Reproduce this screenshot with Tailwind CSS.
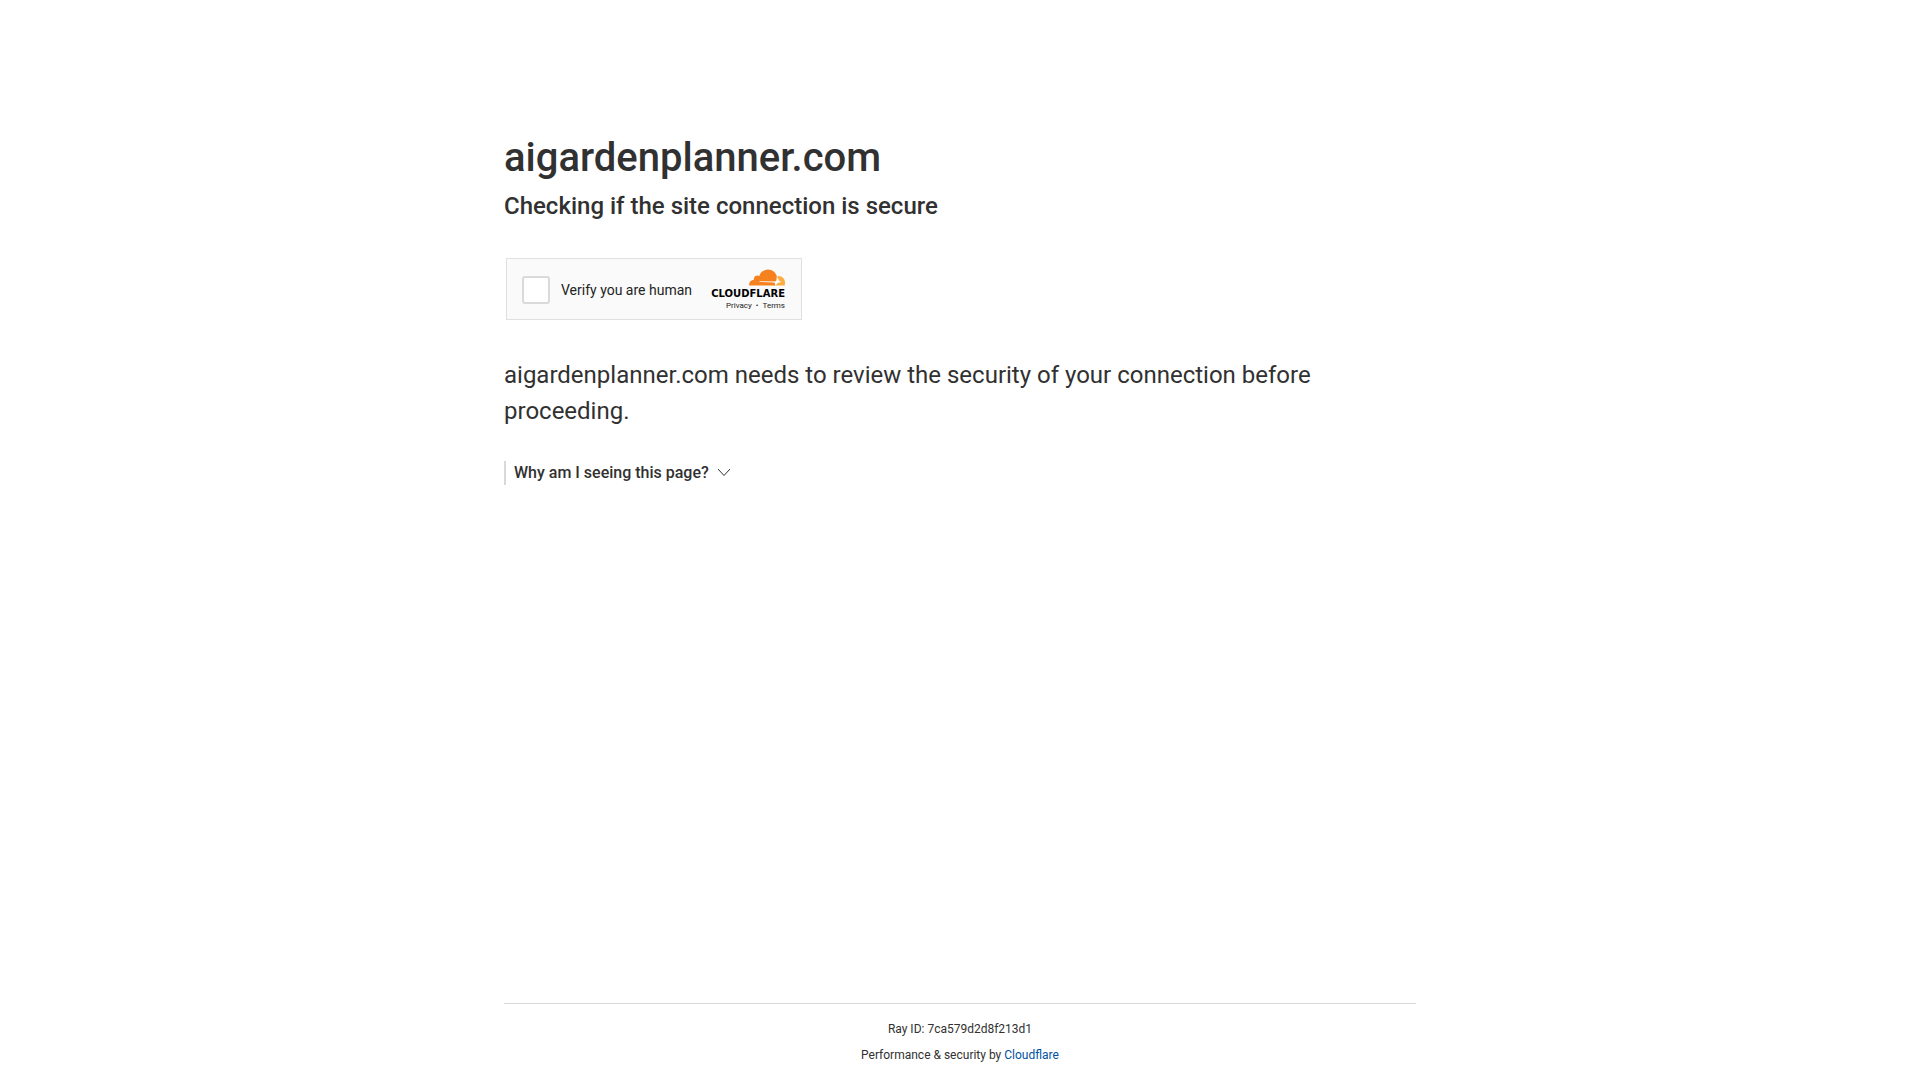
<!DOCTYPE html>
<html lang="en">
<head>
  <meta charset="UTF-8">
  <meta name="viewport" content="width=device-width, initial-scale=1.0">
  <title>Just a moment...</title>
  <script src="https://cdn.jsdelivr.net/npm/@tailwindcss/browser@4"></script>
</head>
<body class="flex min-h-screen flex-col bg-white font-[Roboto,sans-serif] text-[#313131]">
  <main class="mx-auto w-full max-w-[960px] flex-1 px-6 pt-32">
    <h1 class="text-[40px] leading-[60px] font-medium">aigardenplanner.com</h1>
    <h2 class="text-2xl leading-9 font-medium">Checking if the site connection is secure</h2>

    <!-- Challenge widget -->
    <div class="mt-[34px] ml-[2px] flex h-[62px] w-[296px] items-center justify-between border border-[#e0e0e0] bg-[#fafafa] pt-[2px] pr-4 pl-[15px]">
      <label class="flex items-center gap-[11px] text-sm text-[#232323]">
        <input type="checkbox" class="h-7 w-7 appearance-none rounded-[3px] border-2 border-[#dadada] bg-white">
        Verify you are human
      </label>
      <div class="flex flex-col items-end text-[#232323]">
        <svg class="mb-[2px] h-[17px] w-9" viewBox="0 0 36 17" aria-hidden="true">
          <path fill="#fbad41" d="M28.9 6.9C33 6.700 36 9.600 36 13.400Q36 15 35.700 16.600H25Z"/>
          <path fill="#f6821f" d="M.2 16.600C-.4 13.500 1.700 10.900 4.900 10.700C4.300 7.800 7.500 5.300 10.300 7C11.600 3.100 15 .4 19 .4C23.500 .4 26.900 3.300 27.900 7.500L27 12.300L26 16.600Z"/>
          <path fill="#fff" d="M10.500 12.200L25.700 12.400Q27.300 12.200 27.800 10.700L28.800 8L29.700 11Q30.500 12.800 33.200 13Q29.500 13.200 28.400 14.200L26.500 16.600L26 15.600Q26.500 13.800 24.600 13.400L10.500 12.900Z"/>
        </svg>
        <div class="font-['DejaVu_Sans',sans-serif] text-[10px] leading-3 font-bold text-black">CLOUDFLARE</div>
        <div class="flex gap-1 text-[8px] leading-3">
          <a href="#">Privacy</a>
          <span>•</span>
          <a href="#">Terms</a>
        </div>
      </div>
    </div>

    <p class="mt-[37px] text-2xl leading-9">aigardenplanner.com needs to review the security of your connection before proceeding.</p>

    <button type="button" class="mt-8 flex h-6 items-center gap-[7px] border-l-2 border-[#d9d9d9] pl-2 text-base leading-6 font-medium">
      Why am I seeing this page?
      <svg class="h-4 w-4" viewBox="0 0 16 16" fill="none" stroke="#313131" aria-hidden="true">
        <path d="M2 4L8 10.500L14 4"/>
      </svg>
    </button>
  </main>

  <footer class="mx-auto w-full max-w-[960px] px-6 text-center text-xs leading-[18px]">
    <div class="border-t border-[#d9d9d9] py-4">
      <div class="mb-2">Ray ID: 7ca579d2d8f213d1</div>
      <div>Performance &amp; security by <a href="#" class="text-[#0051a3]">Cloudflare</a></div>
    </div>
  </footer>
</body>
</html>
